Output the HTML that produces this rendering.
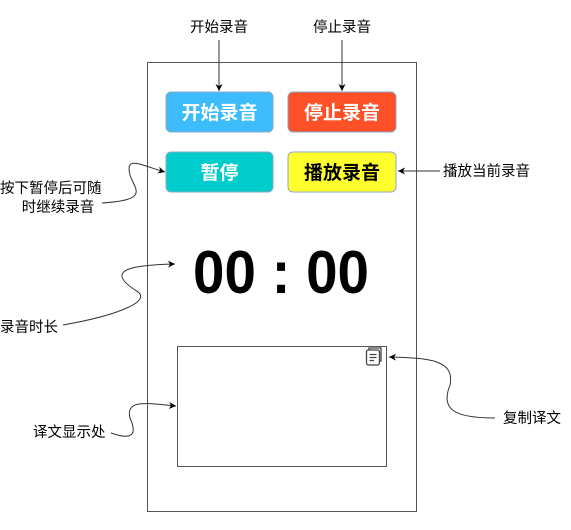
<!DOCTYPE html>
<html><head><meta charset="utf-8"><style>
html,body{margin:0;padding:0;background:#fff;}
svg{display:block;}
text{font-family:"Liberation Sans","Noto Sans CJK SC",sans-serif;}
</style></head><body>
<svg width="571" height="530" viewBox="0 0 571 530" xmlns="http://www.w3.org/2000/svg">
<defs><marker id="a" markerWidth="8" markerHeight="8" refX="7" refY="4" orient="auto" markerUnits="userSpaceOnUse"><path d="M0,0.5 L7,4 L0,7.5 L2,4 Z" fill="#000"/></marker></defs>
<rect x="147.5" y="62.5" width="269" height="449" fill="#fff" stroke="#555" stroke-width="1"/>
<rect x="166" y="92" width="107" height="40" rx="5" fill="#3dbcfb" stroke="#8aa8c8"/>
<rect x="288" y="92" width="108" height="40" rx="5" fill="#fe5127" stroke="#8aa8c8"/>
<rect x="166" y="152" width="107" height="40" rx="5" fill="#00cccc" stroke="#8aa8c8"/>
<rect x="288" y="152" width="108" height="40" rx="5" fill="#ffff2e" stroke="#8aa8c8"/>
<g font-size="19" font-weight="bold" text-anchor="middle">
<text x="219.5" y="119" fill="#fff">开始录音</text>
<text x="342" y="119" fill="#fff">停止录音</text>
<text x="219.5" y="179" fill="#fff">暂停</text>
<text x="342" y="179" fill="#000">播放录音</text>
</g>
<text x="281" y="293" font-size="60" font-weight="bold" text-anchor="middle" textLength="176" lengthAdjust="spacingAndGlyphs">00 : 00</text>
<rect x="177.5" y="346.5" width="209" height="120" fill="#fff" stroke="#555"/>
<g fill="none" stroke="#444" stroke-width="1.3">
<rect x="366.5" y="350" width="13" height="15" rx="2"/>
<path d="M369 350 V348 H381 V361 H379.5"/>
<path d="M369.5 354.5 H376.5 M369.5 357.5 H376.5 M369.5 360.5 H374"/>
</g>
<g font-size="14.5" fill="#000">
<text x="219" y="32" text-anchor="middle">开始录音</text>
<text x="342" y="32" text-anchor="middle">停止录音</text>
<text x="443" y="176">播放当前录音</text>
<text x="0" y="193">按下暂停后可随</text>
<text x="58" y="212" text-anchor="middle">时继续录音</text>
<text x="0" y="332">录音时长</text>
<text x="33" y="437">译文显示处</text>
<text x="503" y="423">复制译文</text>
</g>
<g fill="none" stroke="#333" stroke-width="1" marker-end="url(#a)">
<path d="M219 40 V91"/>
<path d="M342 40 V91"/>
<path d="M440 171 H398"/>
<path d="M102 203 C150 200 135 190 130 175 C125 155 140 165 165 172"/>
<path d="M63 325 C120 315 155 300 135 290 C105 270 130 265 175 264"/>
<path d="M111 433 C125 438 140 440 130 418 C125 398 150 404 176 406"/>
<path d="M495 418 C455 418 440 410 450 385 C455 360 430 358 389 357"/>
</g>
</svg>
</body></html>
